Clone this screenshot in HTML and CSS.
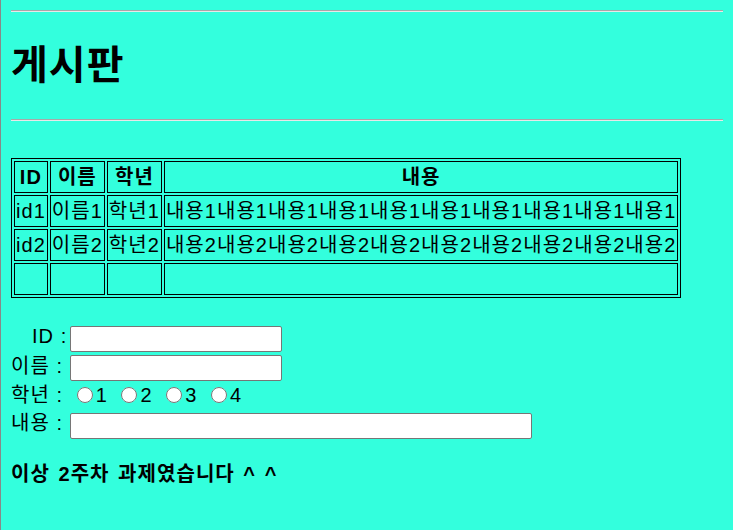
FILE: index.html
```html
<!DOCTYPE html>
<html lang="ko">
<head>
    <meta charset="UTF-8">
    <title>게시판</title>
    <link rel="stylesheet" href="styles.css">
</head>
<body>
    <hr class="line">
    <h1 class="title">게시판</h1>
    <hr class="line">
    <br>
    <table class="board">
        <tr>
            <th>ID</th>
            <th>이름</th>
            <th>학년</th>
            <th>내용</th>
        </tr>
        <tr>
            <td>id1</td>
            <td>이름1</td>
            <td>학년1</td>
            <td>내용1내용1내용1내용1내용1내용1내용1내용1내용1내용1</td>
        </tr>
        <tr>
            <td>id2</td>
            <td>이름2</td>
            <td>학년2</td>
            <td>내용2내용2내용2내용2내용2내용2내용2내용2내용2내용2</td>
        </tr>
        <tr>
            <td>&nbsp;</td>
            <td>&nbsp;</td>
            <td>&nbsp;</td>
            <td>&nbsp;</td>
        </tr>
    </table>
    <br>
    <form class="write">
        <span class="pad">ID :</span><input type="text" class="field"><br>
        이름 : <input type="text" class="field"><br>
        학년 :
        <input type="radio" name="grade" class="radio">1
        <input type="radio" name="grade" class="radio">2
        <input type="radio" name="grade" class="radio">3
        <input type="radio" name="grade" class="radio">4<br>
        내용 : <input type="text" class="field wide"><br>
    </form>
    <h4 class="bye">이상 2주차 과제였습니다 ^ ^</h4>
</body>
</html>
```

FILE: styles.css
```css
html {
    background: #33ffdd;
    border-left: 1px solid #888;
    min-height: 100%;
}
body {
    margin: 0 10px 10px;
    padding-top: 10px;
    font-family: "Liberation Sans", "Noto Sans CJK KR", sans-serif;
    font-size: 20px;
    line-height: 1.33;
    letter-spacing: 0.052em;
    color: #000;
}
.line {
    margin: 0 0 10px;
    border: none;
    border-top: 1px solid #a8a8a8;
    border-bottom: 1px solid #e8e8e8;
    height: 0;
}
.title {
    font-size: 40px;
    margin: 27px 0;
    line-height: 1.33;
}
.board {
    border: 1px solid #000;
    border-spacing: 2px;
}
.board th,
.board td {
    border: 1px solid #000;
    padding: 1px;
    line-height: 28px;
}
.write {
    margin: -2px 0 20px;
    line-height: 28px;
}
.pad {
    padding-left: 21px;
    margin-right: 3px;
}
.field {
    width: 212px;
    height: 26px;
    box-sizing: border-box;
    border: 1px solid #767676;
    border-radius: 2px;
    background: #fff;
    margin: 0;
    vertical-align: baseline;
}
.wide {
    width: 462px;
}
.radio {
    width: 16px;
    height: 16px;
    margin: 0 3px 0 7px;
    vertical-align: -1px;
}
.bye {
    font-size: 20px;
    margin: 22px 0;
    word-spacing: 2px;
}
```
